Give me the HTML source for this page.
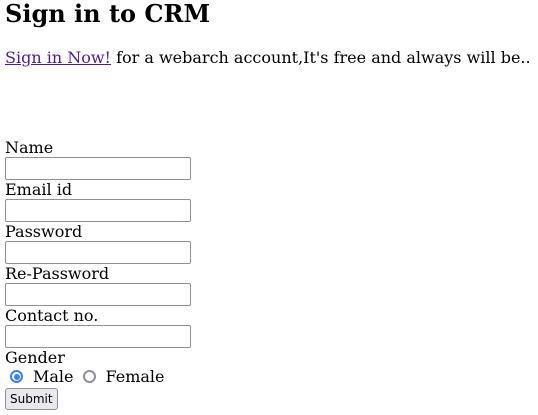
<!DOCTYPE html>
<html><head><style>
body{margin:0;padding:0 5px;font-family:"DejaVu Serif","Liberation Serif",serif;font-size:16px;color:#000;background:#fff;overflow:hidden;}
h2{margin:0;font-size:24px;line-height:28px;font-weight:bold;}
p{margin:20px 0 0;line-height:19px;font-size:16px;word-spacing:0;white-space:nowrap;}
a{color:#551a8b;}
form{margin-top:72px;}
.l{display:block;line-height:18px;height:18px;}
input[type=text]{display:block;box-sizing:border-box;width:186px;height:23px;margin:0 0 1px;border:1px solid #8f8f9d;border-radius:2px;padding:0;}
.r{height:19px;line-height:19px;display:flex;align-items:center;}
.rb{width:13px;height:13px;border:2px solid #8f8f9d;border-radius:50%;box-sizing:border-box;margin:0 10px 0 5px;position:relative;}
.rb.on{border:2px solid #3b82f6;}
.rb.on::after{content:"";position:absolute;left:1.5px;top:1.5px;width:6px;height:6px;border-radius:50%;background:#3b82f6;}
button{font-family:"DejaVu Sans","Liberation Sans",sans-serif;font-size:12px;height:22px;padding:0 4px;border:1px solid #8f8f9d;border-radius:3px;background:#e9e9ed;margin-top:2px;}
</style></head><body>
<h2>Sign in to CRM</h2>
<p><a href="#">Sign in Now!</a> for a webarch account,It's free and always will be..</p>
<form>
<span class="l">Name</span><input type="text">
<span class="l">Email id</span><input type="text">
<span class="l">Password</span><input type="text">
<span class="l">Re-Password</span><input type="text">
<span class="l">Contact no.</span><input type="text">
<span class="l">Gender</span>
<div class="r"><span class="rb on"></span>Male<span class="rb" style="margin-left:9px"></span>Female</div>
<button type="button">Submit</button>
</form>
</body></html>
